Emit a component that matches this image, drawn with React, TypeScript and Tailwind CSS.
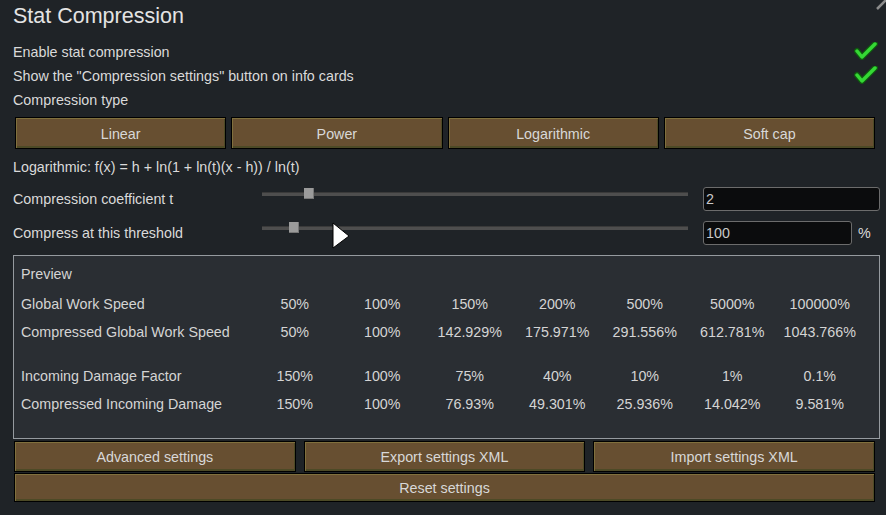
import React from 'react'

const font = { fontFamily: '"Liberation Sans", Arial, sans-serif' }

function Check() {
  return (
    <svg width="24" height="18" viewBox="0 0 24 18">
      <polyline points="3,9 8,15 21,2" fill="none" stroke="#0f5a0f" strokeWidth="6" strokeLinecap="round" strokeLinejoin="round" />
      <polyline points="3,9 8,15 21,2" fill="none" stroke="#35d835" strokeWidth="3.5" strokeLinecap="round" strokeLinejoin="round" />
    </svg>
  )
}

function Btn({ label, className = '' }: { label: string; className?: string }) {
  return (
    <div
      className={`flex items-center justify-center border border-black bg-[#674f31] pt-[1px] text-[14.3px] text-[#d8d8d8] shadow-[inset_1px_1px_0_#80703d,inset_-1px_-2px_0_#4d4a26] ${className}`}
    >
      {label}
    </div>
  )
}

function SliderRow({ label, value, thumb, fieldW, suffix }: { label: string; value: string; thumb: string; fieldW: string; suffix?: string }) {
  return (
    <div className="flex h-[25px] items-center">
      <div className="w-[249px] shrink-0 pt-[1px]">{label}</div>
      <div className="relative mb-[10px] h-[4px] w-[426px] shrink-0 bg-[#4e4e4e] shadow-[inset_0_1px_0_#3a3a3a]">
        <div className={`absolute top-[-4px] h-[11px] w-[10px] bg-[#9b9b9b] shadow-[inset_-1px_-1px_0_#777] ${thumb}`} />
      </div>
      <div className={`ml-[15px] flex h-[24px] shrink-0 items-center rounded-[3px] border border-[#6c6c6c] bg-[#0b0c0d] px-[2px] pt-[1px] text-[#c8c8c8] ${fieldW}`}>
        {value}
      </div>
      {suffix && <span className="ml-[6px]">{suffix}</span>}
    </div>
  )
}

const rows = [
  { label: 'Global Work Speed', vals: ['50%', '100%', '150%', '200%', '500%', '5000%', '100000%'] },
  { label: 'Compressed Global Work Speed', vals: ['50%', '100%', '142.929%', '175.971%', '291.556%', '612.781%', '1043.766%'] },
  { label: 'Incoming Damage Factor', vals: ['150%', '100%', '75%', '40%', '10%', '1%', '0.1%'] },
  { label: 'Compressed Incoming Damage', vals: ['150%', '100%', '76.93%', '49.301%', '25.936%', '14.042%', '9.581%'] },
]

function PreviewRow({ label, vals }: { label: string; vals: string[] }) {
  return (
    <div className="grid h-[28px] grid-cols-[230px_repeat(7,87.5px)] items-center pt-[1px]">
      <div>{label}</div>
      {vals.map((v, i) => (
        <div key={i} className="text-center">{v}</div>
      ))}
    </div>
  )
}

export default function App() {
  return (
    <div
      style={font}
      className="relative h-[515px] w-[886px] overflow-hidden bg-[#1f2327] pl-[13px] pr-[6px] text-[14.3px] leading-[20px] text-[#dadada]"
    >
      {/* close button corner */}
      <svg className="absolute right-0 top-0" width="12" height="10" viewBox="0 0 12 10">
        <line x1="3" y1="9" x2="12" y2="0" stroke="#8c8c8c" strokeWidth="2.5" />
      </svg>

      <div className="h-[39px] pt-[4px] text-[21.5px] leading-[24px] text-[#e4e4e4]">Stat Compression</div>

      <div className="flex h-6 items-center justify-between pt-[1px]">
        <span>Enable stat compression</span>
        <span className="mr-[2px] mb-[1px]"><Check /></span>
      </div>
      <div className="flex h-6 items-center justify-between pt-[1px]">
        <span>Show the "Compression settings" button on info cards</span>
        <span className="mr-[2px] mb-[1px]"><Check /></span>
      </div>
      <div className="flex h-6 items-center pt-[1px]">Compression type</div>

      <div className="mt-[6px] flex h-[32px] gap-[5px] pl-[2px] pr-[5px]">
        <Btn label="Linear" className="flex-1" />
        <Btn label="Power" className="flex-1" />
        <Btn label="Logarithmic" className="flex-1" />
        <Btn label="Soft cap" className="flex-1" />
      </div>

      <div className="mt-[7px] flex h-[22px] items-center">Logarithmic: f(x) = h + ln(1 + ln(t)(x - h)) / ln(t)</div>

      <div className="mt-[8px]">
        <SliderRow label="Compression coefficient t" value="2" thumb="left-[42px]" fieldW="w-[177px]" />
      </div>
      <div className="mt-[9px]">
        <SliderRow label="Compress at this threshold" value="100" thumb="left-[27px]" fieldW="w-[149px]" suffix="%" />
      </div>

      <div className="mt-[10px] h-[184px] border border-[#959a9f] bg-[#2a2e33] px-[7px] pt-[3px] text-[#d4d4d4]">
        <div className="mb-[2px] flex h-[28px] items-center pt-[1px]">Preview</div>
        <PreviewRow {...rows[0]} />
        <PreviewRow {...rows[1]} />
        <div className="h-[16px]" />
        <PreviewRow {...rows[2]} />
        <PreviewRow {...rows[3]} />
      </div>

      <div className="mt-[2px] flex h-[31px] gap-[8px] pl-[1px] pr-[5px]">
        <Btn label="Advanced settings" className="flex-1" />
        <Btn label="Export settings XML" className="flex-1" />
        <Btn label="Import settings XML" className="flex-1" />
      </div>
      <div className="mt-[1px] flex h-[29px] pl-[1px] pr-[5px]">
        <Btn label="Reset settings" className="flex-1" />
      </div>

      {/* mouse cursor */}
      <svg className="absolute left-[332px] top-[222px]" width="20" height="28" viewBox="0 0 20 28">
        <polygon points="1,1 1,26 17,14" fill="#ffffff" stroke="#000000" strokeWidth="1" />
      </svg>
    </div>
  )
}
